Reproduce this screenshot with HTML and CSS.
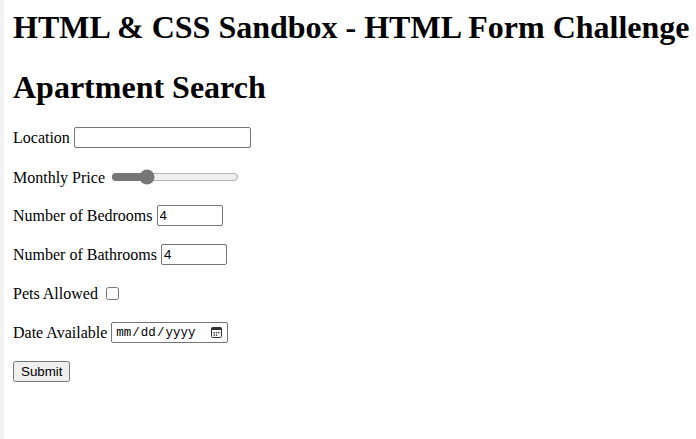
FILE: index.html
```html
<!DOCTYPE html>
<html lang="en">
<head>
<meta charset="utf-8">
<title>HTML Form Challenge</title>
<link rel="stylesheet" href="styles.css">
</head>
<body class="page">
<h1 class="title">HTML &amp; CSS Sandbox - HTML Form Challenge</h1>
<form class="search">
  <h1 class="title subtitle">Apartment Search</h1>
  <div class="fields">
    <div class="row"><label for="loc">Location</label><input class="text" id="loc" type="text"></div>
    <div class="row"><label class="low" for="price">Monthly Price</label><input class="range" id="price" type="range" min="0" max="100" value="25"></div>
    <div class="row"><label for="bed">Number of Bedrooms</label><input class="num" id="bed" type="number" value="4"></div>
    <div class="row"><label for="bath">Number of Bathrooms</label><input class="num" id="bath" type="number" value="4"></div>
    <div class="row"><label for="pets">Pets Allowed</label><input class="check" id="pets" type="checkbox"></div>
    <div class="row"><label for="date">Date Available</label><input class="date" id="date" type="date"></div>
    <div class="row"><button class="submit" type="submit">Submit</button></div>
  </div>
</form>
</body>
</html>
```
FILE: styles.css
```css
html {
  border-left: 4px solid #f3f3f3;
  background: #fff;
  min-height: 100%;
}
.page {
  margin: 0;
  padding: 9px 8px 8px 9px;
  font-family: "Liberation Serif", "Times New Roman", serif;
  font-size: 16px;
  color: #000;
}
.title {
  font-size: 32px;
  font-weight: bold;
  margin: 0 0 23px;
  white-space: nowrap;
}
.subtitle {
  margin-bottom: 20px;
}
.fields {
  display: flex;
  flex-direction: column;
  gap: 16px;
}
.row {
  display: flex;
  align-items: center;
  gap: 4px;
  height: 23px;
}
.low {
  padding-top: 3px;
}
.text, .num, .date {
  box-sizing: border-box;
  height: 21px;
  margin: 0;
  font-family: "Liberation Sans", Arial, sans-serif;
  font-size: 13.33px;
  border: 1px solid #767676;
  border-radius: 2px;
  padding: 1px 2px;
}
.text {
  width: 177px;
}
.num {
  width: 66px;
}
.date {
  width: 117px;
  font-family: "Liberation Mono", "DejaVu Sans Mono", monospace;
  font-size: 12.5px;
  padding-left: 3px;
}
.date::-webkit-calendar-picker-indicator {
  width: 13px;
  height: 13px;
  padding: 0;
  margin-left: 2px;
  margin-right: 2px;
  background-image: url("data:image/svg+xml,%3Csvg xmlns='http://www.w3.org/2000/svg' viewBox='0 0 13 13'%3E%3Crect x='1.5' y='1.5' width='10' height='10' rx='1.2' fill='none' stroke='%23333'/%3E%3Crect x='1.5' y='1.5' width='10' height='2.5' fill='%23333'/%3E%3Crect x='3.5' y='6' width='1.4' height='1.4' fill='%23333'/%3E%3Crect x='5.8' y='6' width='1.4' height='1.4' fill='%23333'/%3E%3Crect x='8.1' y='6' width='1.4' height='1.4' fill='%23333'/%3E%3Crect x='3.5' y='8.4' width='1.4' height='1.4' fill='%23333'/%3E%3Crect x='5.8' y='8.4' width='1.4' height='1.4' fill='%23333'/%3E%3C/svg%3E");
  background-size: 13px 13px;
  background-repeat: no-repeat;
}
.range {
  accent-color: #767676;
  margin: 2px;
  width: 128px;
}
.check {
  margin: 3px 3px 3px 4px;
}
.submit {
  font-family: "Liberation Sans", Arial, sans-serif;
  font-size: 13.33px;
  height: 21px;
  margin: 0;
}
```
